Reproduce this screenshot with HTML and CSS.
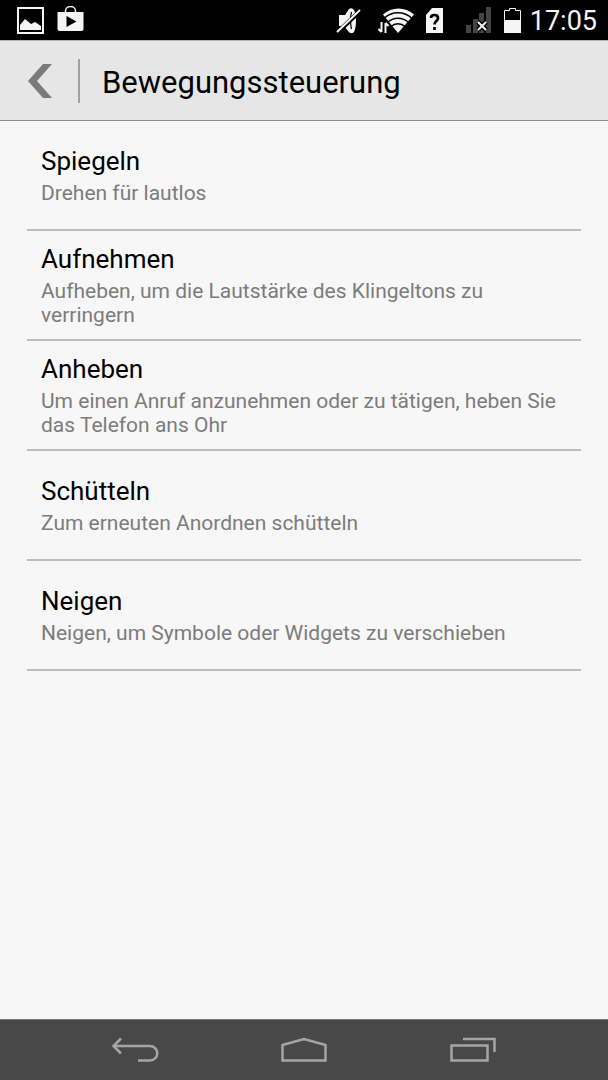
FILE: index.html
```html
<!DOCTYPE html>
<html lang="de">
<head>
<meta charset="utf-8">
<meta name="viewport" content="width=device-width, initial-scale=1">
<title>Bewegungssteuerung</title>
<link rel="stylesheet" href="styles.css">
</head>
<body>
<div class="status-bar">
  <div class="status-group">
    <svg width="28" height="28" viewBox="0 0 28 28" aria-hidden="true"><rect x="2" y="2" width="25" height="25" fill="none" stroke="#f5f5f5" stroke-width="2"/><path d="M4 24v-5l5-6 6 5 4-2 6 4v4z" fill="#f5f5f5"/></svg>
    <svg width="28" height="28" viewBox="0 0 28 28" aria-hidden="true"><path d="M9.500 7V5a5 4.500 0 0 1 10 0V7" fill="none" stroke="#f5f5f5" stroke-width="1.500"/><path d="M1.500 6h26v17q0 2-2 2h-22q-2 0-2-2z" fill="#f5f5f5"/><path d="M10.500 10v11l10-5.500z" fill="#000"/></svg>
  </div>
  <div class="status-group status-right">
    <svg width="42" height="28" viewBox="338 7 42 28" aria-hidden="true"><path d="M341 15h6l4-6q3-2 5 1 2 4 2 11t-2 11q-3 3-6-1l-4-5h-5z" fill="#f5f5f5"/><path d="M353.500 12q-2 8 0 17" fill="none" stroke="#000" stroke-width="1.200"/><path d="M338 34l25-24" stroke="#000" stroke-width="4.500"/><path d="M339 32l23-22" stroke="#f5f5f5" stroke-width="2"/></svg>
    <svg width="46" height="28" viewBox="379 7 46 28" aria-hidden="true"><path d="M384 14.500a23 23 0 0 1 31 0l-16 18.500z" fill="#f5f5f5"/><path d="M385 18.500a20 20 0 0 1 28 0M388.500 22.500a15 15 0 0 1 21 0M392 26.500a10 10 0 0 1 14 0" fill="none" stroke="#000" stroke-width="1.500"/><path d="M378 21h8l5 3v10h-13z" fill="#000"/><path d="M382.500 22v10m-3-3l3 3M386.500 33V23m0 0l3 3" fill="none" stroke="#f5f5f5" stroke-width="2"/></svg>
    <svg width="42" height="28" viewBox="425 7 42 28" aria-hidden="true"><path d="M433 8h11v25h-17V15z" fill="#f5f5f5"/><path d="M432 18q0-3 3.500-3t3.500 3q0 2-1.700 3.200-1.800 1.300-1.800 3.300M435.500 27v3" fill="none" stroke="#000" stroke-width="2.700"/></svg>
    <svg width="37" height="28" viewBox="467 7 37 28" aria-hidden="true"><path d="M467 25h5v8h-5zM474 19h5v14h-5zM480 13h5v20h-5zM487 7h5v26h-5z" fill="#444"/><path d="M479 22l8 8M487 22l-8 8" stroke="#000" stroke-width="5"/><path d="M479 22l8 8M487 22l-8 8" stroke="#f5f5f5" stroke-width="2"/></svg>
    <svg width="27" height="28" viewBox="504 7 27 28" aria-hidden="true"><path d="M505.500 32.500v-22h5v-2h6v2h5v22z" fill="none" stroke="#f5f5f5"/><path d="M505 20h17v13h-17z" fill="#f5f5f5"/></svg>
    <time class="clock" datetime="17:05">17:05</time>
  </div>
</div>
<header class="title-bar">
  <button class="back" type="button" aria-label="Zurück"><svg width="24" height="36" viewBox="28 63 24 36" aria-hidden="true"><path d="M43 64h9L37 81l15 17h-9L28 81z" fill="#7b7b7b"/></svg></button>
  <h1 class="page-title">Bewegungssteuerung</h1>
</header>
<main class="content">
  <ul class="list">
    <li><a class="row" href="#spiegeln"><span class="row-title">Spiegeln</span><span class="row-text">Drehen für lautlos</span></a></li>
    <li><a class="row" href="#aufnehmen"><span class="row-title">Aufnehmen</span><span class="row-text">Aufheben, um die Lautstärke des Klingeltons zu verringern</span></a></li>
    <li><a class="row" href="#anheben"><span class="row-title">Anheben</span><span class="row-text">Um einen Anruf anzunehmen oder zu tätigen, heben Sie das Telefon ans Ohr</span></a></li>
    <li><a class="row" href="#schuetteln"><span class="row-title">Schütteln</span><span class="row-text">Zum erneuten Anordnen schütteln</span></a></li>
    <li><a class="row" href="#neigen"><span class="row-title">Neigen</span><span class="row-text">Neigen, um Symbole oder Widgets zu verschieben</span></a></li>
  </ul>
</main>
<nav class="nav-bar" aria-label="Navigation">
  <button class="nav-button" type="button" aria-label="Zurück"><svg width="48" height="28" viewBox="111 1036 48 28" aria-hidden="true"><path d="M113 1046h37a7 7 0 0 1 0 14.500h-12M121 1038.500l-7.500 7.500 7.500 7.500" fill="none" stroke="#a5a5a5" stroke-width="2.500"/></svg></button>
  <button class="nav-button" type="button" aria-label="Startseite"><svg width="48" height="28" viewBox="280 1036 48 28" aria-hidden="true"><path d="M282.500 1060.500V1045l21.500-6 21.500 6v15.500z" fill="none" stroke="#a5a5a5" stroke-width="2.500"/></svg></button>
  <button class="nav-button" type="button" aria-label="Letzte Apps"><svg width="48" height="28" viewBox="449 1036 48 28" aria-hidden="true"><path d="M451.500 1045.500h36v15h-36zM463 1039h31.500v13" fill="none" stroke="#a5a5a5" stroke-width="2.500"/></svg></button>
</nav>
</body>
</html>
```
FILE: styles.css
```css
* {
  box-sizing: border-box;
}

body {
  margin: 0;
  min-height: 100vh;
  display: flex;
  flex-direction: column;
  background: #f7f7f7;
  color: #000;
  font-family: Roboto, "Liberation Sans", sans-serif;
}

svg {
  display: block;
}

button {
  border: 0;
  padding: 0;
  background: none;
}

.status-bar {
  display: flex;
  justify-content: space-between;
  height: 40px;
  padding: 0 11px 0 16px;
  background: #000;
}

.status-group {
  display: flex;
  align-items: flex-start;
  gap: 12px;
  padding-top: 6px;
}

.status-right {
  gap: 0;
  padding-top: 7px;
}

.clock {
  color: #f5f5f5;
  font-size: 27px;
  line-height: 28px;
}

.title-bar {
  display: flex;
  align-items: center;
  height: 81px;
  background: #e6e6e6;
  border-top: 1px solid #b5b5b5;
  border-bottom: 1px solid #8c8c8c;
}

.back {
  display: flex;
  align-items: center;
  width: 80px;
  height: 44px;
  padding-left: 28px;
  border-right: 2px solid #a0a0a0;
}

.page-title {
  margin: 0;
  padding: 4px 0 0 22px;
  font-size: 31px;
  font-weight: 400;
  line-height: 36px;
}

.content {
  flex: 1;
  padding: 0 27px;
}

.list {
  margin: 0;
  padding: 0;
  list-style: none;
}

.row {
  display: flex;
  flex-direction: column;
  justify-content: center;
  min-height: 110px;
  padding: 10px 14px 12px;
  border-bottom: 2px solid #bcbcbc;
  color: inherit;
  text-decoration: none;
}

.row-title {
  font-size: 26px;
  line-height: 36px;
}

.row-text {
  padding-top: 2px;
  color: #7c7c7c;
  font-size: 21px;
  line-height: 24px;
}

.nav-bar {
  display: flex;
  justify-content: center;
  gap: 121px;
  height: 61px;
  border-top: 1px solid #777;
  background: #484849;
}

.nav-button {
  display: flex;
  align-items: center;
}
```
